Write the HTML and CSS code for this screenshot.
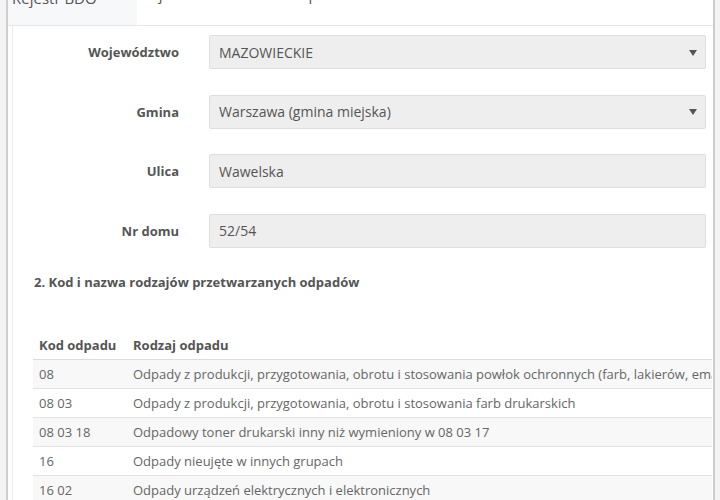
FILE: index.html
```html
<!DOCTYPE html>
<html lang="pl">
<head>
<meta charset="utf-8">
<title>Rejestr BDO</title>
<link rel="stylesheet" href="styles.css">
</head>
<body>
<div class="page">
  <div class="window">
    <div class="tabs">
      <div class="tab tab-active">Rejestr BDO</div>
      <div class="tab tab-2">Objaśnienia</div>
      <div class="tab tab-3">Status operatora</div>
    </div>
    <div class="panel">
      <div class="form">
        <div class="row">
          <label class="label">Województwo</label>
          <div class="field select"><span class="value">MAZOWIECKIE</span><span class="caret"></span></div>
        </div>
        <div class="row">
          <label class="label">Gmina</label>
          <div class="field select"><span class="value">Warszawa (gmina miejska)</span><span class="caret"></span></div>
        </div>
        <div class="row">
          <label class="label">Ulica</label>
          <div class="field"><span class="value">Wawelska</span></div>
        </div>
        <div class="row">
          <label class="label">Nr domu</label>
          <div class="field"><span class="value">52/54</span></div>
        </div>
      </div>
      <h2 class="section-title">2. Kod i nazwa rodzajów przetwarzanych odpadów</h2>
      <div class="table-wrap">
        <table class="waste">
          <thead>
            <tr><th class="col-code">Kod odpadu</th><th>Rodzaj odpadu</th></tr>
          </thead>
          <tbody>
            <tr><td>08</td><td>Odpady z produkcji, przygotowania, obrotu i stosowania powłok ochronnych (farb, lakierów, emalii ceramicznych), kitu, klejów, szczeliw i farb drukarskich</td></tr>
            <tr><td>08 03</td><td>Odpady z produkcji, przygotowania, obrotu i stosowania farb drukarskich</td></tr>
            <tr><td>08 03 18</td><td>Odpadowy toner drukarski inny niż wymieniony w 08 03 17</td></tr>
            <tr><td>16</td><td>Odpady nieujęte w innych grupach</td></tr>
            <tr><td>16 02</td><td>Odpady urządzeń elektrycznych i elektronicznych</td></tr>
          </tbody>
        </table>
      </div>
    </div>
  </div>
  <div class="edge"></div>
</div>
</body>
</html>
```

FILE: styles.css
```css
html, body {
  margin: 0;
  padding: 0;
  width: 720px;
  height: 500px;
  overflow: hidden;
}
body {
  background: #f4f4f4;
  font-family: "Open Sans", "Liberation Sans", sans-serif;
  color: #555;
}
.page {
  display: flex;
  width: 720px;
  height: 500px;
  overflow: hidden;
}
.window {
  margin-left: 6px;
  width: 705px;
  flex: 0 0 705px;
  height: 500px;
  background: #fff;
  border-left: 2px solid #cfcfcf;
  overflow: hidden;
}
.edge {
  flex: 0 0 2px;
  height: 500px;
  background: #cdcdcd;
}
.tabs {
  display: flex;
  height: 25px;
  border-bottom: 1px solid #e6e6e6;
  overflow: hidden;
}
.tab {
  font-size: 15px;
  line-height: 20px;
  margin-top: -16px;
  height: 45px;
  color: #555;
  white-space: nowrap;
}
.tab-active {
  flex: 0 0 125px;
  margin-top: -12px;
  padding-left: 4px;
  background: #f6f8fa;
}
.tab-2 {
  flex: 0 0 102px;
  padding-left: 1px;
}
.tab-3 {
  padding-left: 12px;
}
.panel {
  margin-left: 4px;
  border-left: 1px solid #ececec;
  height: 480px;
}
.form {
  padding-top: 9px;
  display: flex;
  flex-direction: column;
  gap: 25.5px;
}
.row {
  display: grid;
  grid-template-columns: 166px 497px;
  column-gap: 30px;
  align-items: center;
}
.label {
  text-align: right;
  font-weight: 700;
  font-size: 13px;
  color: #555;
}
.field {
  box-sizing: border-box;
  height: 34px;
  background: #eeeeee;
  border: 1px solid #dedede;
  border-radius: 2px;
  display: flex;
  align-items: center;
  padding: 0 8px 0 9px;
  font-size: 14px;
  color: #555;
}
.value {
  flex: 1;
}
.caret {
  width: 0;
  height: 0;
  border-left: 4px solid transparent;
  border-right: 4px solid transparent;
  border-top: 6px solid #555;
  margin-top: 1px;
}
.section-title {
  margin: 25px 0 0 21px;
  font-size: 13px;
  line-height: 18px;
  font-weight: 700;
  color: #555;
}
.table-wrap {
  margin: 40px 0 0 20px;
  width: 679px;
  overflow: hidden;
}
.waste {
  border-collapse: collapse;
  font-size: 13px;
  color: #666;
  white-space: nowrap;
}
.waste th {
  text-align: left;
  font-weight: 700;
  color: #555;
  height: 28px;
  padding: 0 6px;
  border-bottom: 1px solid #dcdcdc;
}
.waste th.col-code {
  width: 82px;
  min-width: 82px;
}
.waste td {
  height: 28px;
  padding: 0 6px;
  border-top: 1px solid #e2e2e2;
}
.waste tbody tr:nth-child(odd) {
  background: #f8f8f8;
}
```
